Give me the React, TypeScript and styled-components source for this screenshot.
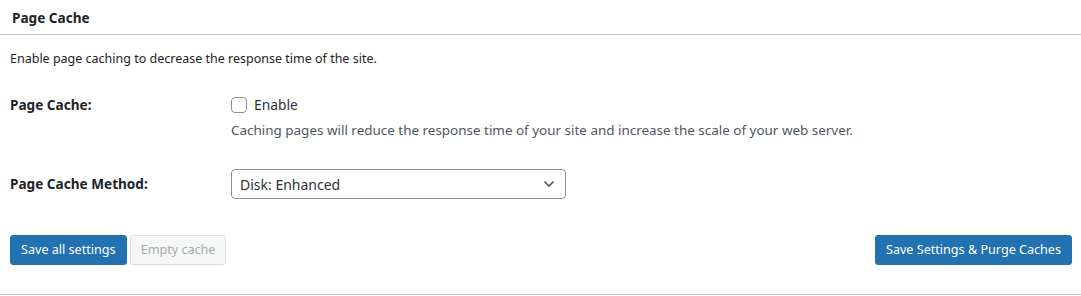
import styled, { createGlobalStyle } from 'styled-components'

const GlobalStyle = createGlobalStyle`
  html, body {
    margin: 0;
    padding: 0;
    background: #ffffff;
  }
  body {
    font-family: 'Noto Sans', 'Open Sans', sans-serif;
    font-size: 13px;
    color: #1d2327;
  }
`

const Postbox = styled.div`
  width: 1081px;
  background: #ffffff;
  border-bottom: 1px solid #c3c4c7;
`

const Header = styled.h2`
  margin: 0;
  height: 35px;
  box-sizing: border-box;
  padding: 0 12px;
  display: flex;
  align-items: center;
  font-size: 13.6px;
  font-weight: 700;
  color: #1d2327;
  border-bottom: 1px solid #c3c4c7;
`

const Inside = styled.div`
  padding: 14px 9px 29px 10px;
`

const Intro = styled.p`
  margin: 0 0 26px;
  font-size: 12.5px;
  line-height: 20px;
`

const FormTable = styled.div`
  display: flex;
  flex-direction: column;
  gap: 29px;
`

const Row = styled.div`
  display: grid;
  grid-template-columns: 221px 1fr;
  align-items: start;
`

const Label = styled.div<{ $top?: number }>`
  font-weight: 700;
  font-size: 13.6px;
  line-height: 20px;
  padding-top: ${({ $top }) => $top ?? 0}px;
`

const Field = styled.div`
  display: flex;
  flex-direction: column;
  gap: 5px;
`

const CheckLabel = styled.label`
  display: flex;
  align-items: center;
  gap: 7px;
  font-size: 13.8px;
  line-height: 20px;
  color: #2c3338;
`

const Checkbox = styled.span`
  width: 16px;
  height: 16px;
  box-sizing: border-box;
  border: 1px solid #8c8f94;
  border-radius: 4px;
  background: #fff;
`

const Description = styled.p`
  margin: 0;
  font-size: 13.45px;
  line-height: 20px;
  color: #50575e;
`

const Select = styled.div`
  width: 335px;
  height: 30px;
  box-sizing: border-box;
  border: 1px solid #8c8f94;
  border-radius: 4px;
  padding: 0 10px 0 8px;
  display: flex;
  align-items: center;
  justify-content: space-between;
  font-size: 14px;
  color: #2c3338;
`

const Actions = styled.div`
  margin-top: 36px;
  display: flex;
  justify-content: space-between;
  align-items: center;
`

const ButtonGroup = styled.div`
  display: flex;
  gap: 3px;
`

const Button = styled.button<{ $primary?: boolean }>`
  height: 30px;
  box-sizing: border-box;
  padding: 0 10px;
  border-radius: 3px;
  font-family: inherit;
  font-size: 12.6px;
  line-height: 28px;
  border: 1px solid ${({ $primary }) => ($primary ? '#2271b1' : '#dcdcde')};
  background: ${({ $primary }) => ($primary ? '#2271b1' : '#f6f7f7')};
  color: ${({ $primary }) => ($primary ? '#ffffff' : '#a7aaad')};
`

export default function App() {
  return (
    <>
      <GlobalStyle />
      <Postbox>
        <Header>Page Cache</Header>
        <Inside>
          <Intro>Enable page caching to decrease the response time of the site.</Intro>
          <FormTable>
            <Row>
              <Label>Page Cache:</Label>
              <Field>
                <CheckLabel>
                  <Checkbox />
                  Enable
                </CheckLabel>
                <Description>
                  Caching pages will reduce the response time of your site and increase the scale of your web server.
                </Description>
              </Field>
            </Row>
            <Row>
              <Label $top={5}>Page Cache Method:</Label>
              <Select>
                <span>Disk: Enhanced</span>
                <svg width="12" height="8" viewBox="0 0 12 8" fill="none">
                  <path d="M1.5 1.5 6 6l4.5-4.5" stroke="#50575e" strokeWidth="1.6" />
                </svg>
              </Select>
            </Row>
          </FormTable>
          <Actions>
            <ButtonGroup>
              <Button $primary>Save all settings</Button>
              <Button disabled>Empty cache</Button>
            </ButtonGroup>
            <Button $primary>Save Settings &amp; Purge Caches</Button>
          </Actions>
        </Inside>
      </Postbox>
    </>
  )
}
